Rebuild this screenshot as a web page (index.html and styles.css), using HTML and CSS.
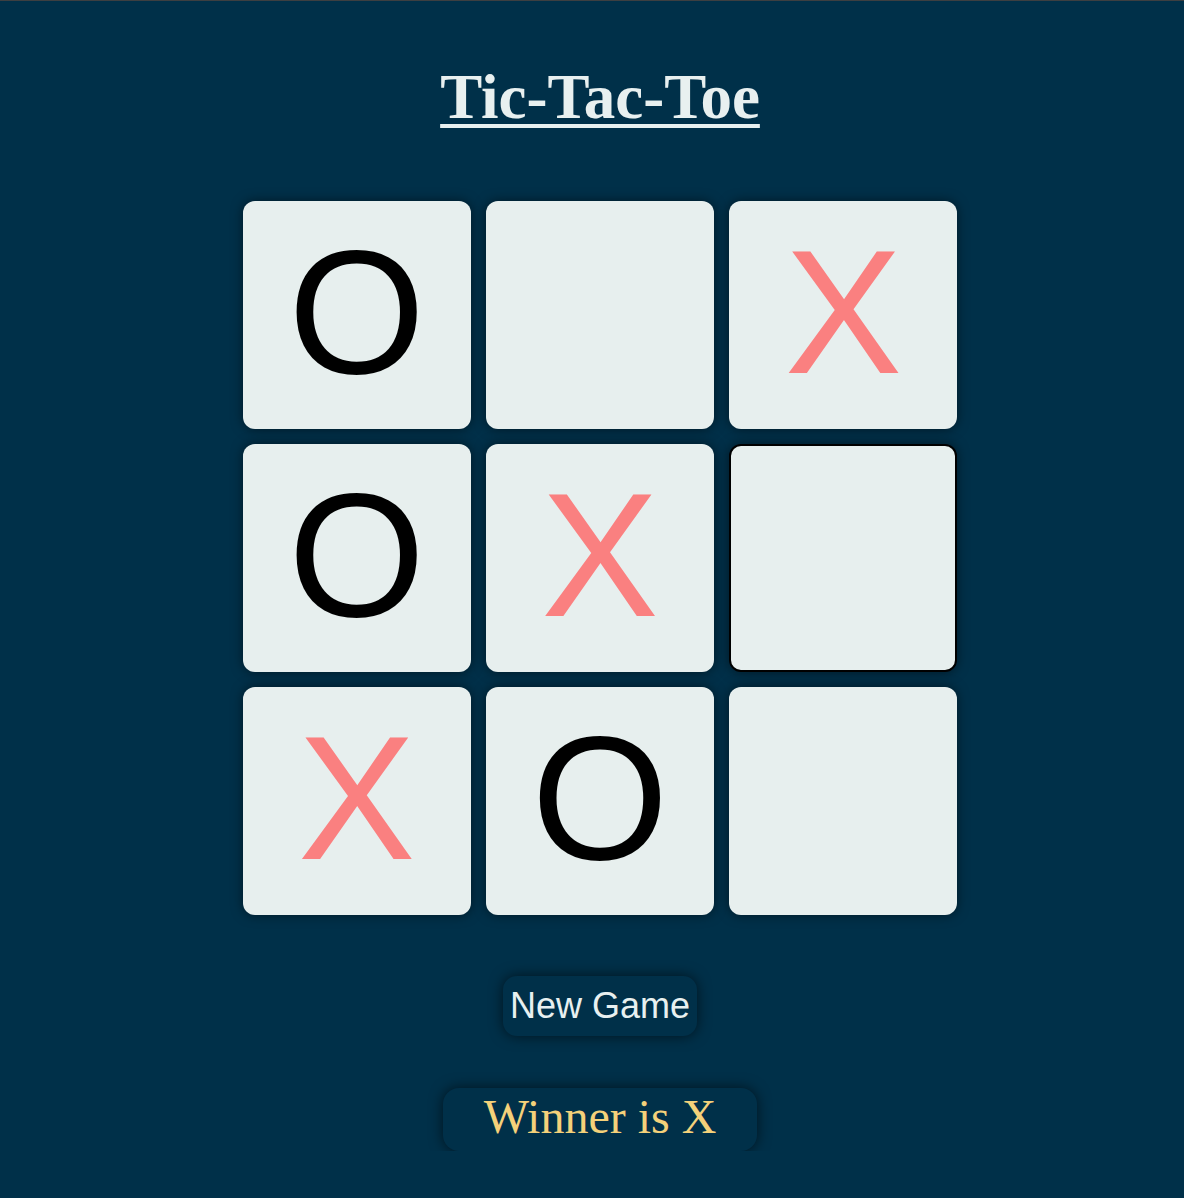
FILE: index.html
```html
<!DOCTYPE html>
<html lang="en">
<head>
<meta charset="utf-8">
<title>Tic-Tac-Toe</title>
<link rel="stylesheet" href="styles.css">
</head>
<body>
  <main class="page">
    <h1 class="title">Tic-Tac-Toe</h1>
    <div class="game">
      <button class="box o">O</button>
      <button class="box"></button>
      <button class="box x">X</button>
      <button class="box o">O</button>
      <button class="box x">X</button>
      <button class="box hovered"></button>
      <button class="box x">X</button>
      <button class="box o">O</button>
      <button class="box"></button>
    </div>
    <button class="reset">New Game</button>
    <p class="msg">Winner is X</p>
  </main>
</body>
</html>
```
FILE: styles.css
```css
html {
  border-top: 1px solid #3d3f41;
  background: #003049;
}
body {
  margin: 0;
  padding-left: 16px;
  background: #003049;
}
.page {
  display: flex;
  flex-direction: column;
  align-items: center;
  padding-top: 59px;
}
.title {
  margin: 0;
  font-family: "Liberation Serif", "Times New Roman", serif;
  font-weight: bold;
  font-size: 63px;
  line-height: 74px;
  color: #e8f0f0;
  text-decoration: underline;
  text-decoration-thickness: 4px;
  text-underline-offset: 6px;
}
.game {
  margin-top: 67px;
  width: 715px;
  display: grid;
  grid-template-columns: repeat(3, 1fr);
  grid-auto-rows: 228px;
  gap: 15px;
}
.box {
  box-sizing: border-box;
  border: none;
  border-radius: 12px;
  background: #e7efee;
  box-shadow: 0 0 12px rgba(0, 0, 0, 0.5);
  font-family: "Liberation Sans", Arial, sans-serif;
  font-size: 176px;
  padding: 0 0 7px;
  display: flex;
  align-items: center;
  justify-content: center;
  color: #000;
}
.box.x {
  color: #fa8080;
}
.box.hovered {
  border: 2px solid #000;
}
.reset {
  margin-top: 61px;
  height: 60px;
  padding: 0 7px;
  border: none;
  border-radius: 14px;
  background: #003049;
  color: #e8f0f0;
  font-family: "Liberation Sans", Arial, sans-serif;
  font-size: 36px;
  box-shadow: 0 0 14px rgba(0, 0, 0, 0.6);
}
.msg {
  margin: 52px 0 0;
  padding: 1px 41px 7px;
  border-radius: 16px;
  background: #003049;
  color: #f4d17a;
  font-family: "Liberation Serif", "Times New Roman", serif;
  font-size: 48px;
  line-height: 55px;
  box-shadow: 0 0 14px rgba(0, 0, 0, 0.6);
}
```
